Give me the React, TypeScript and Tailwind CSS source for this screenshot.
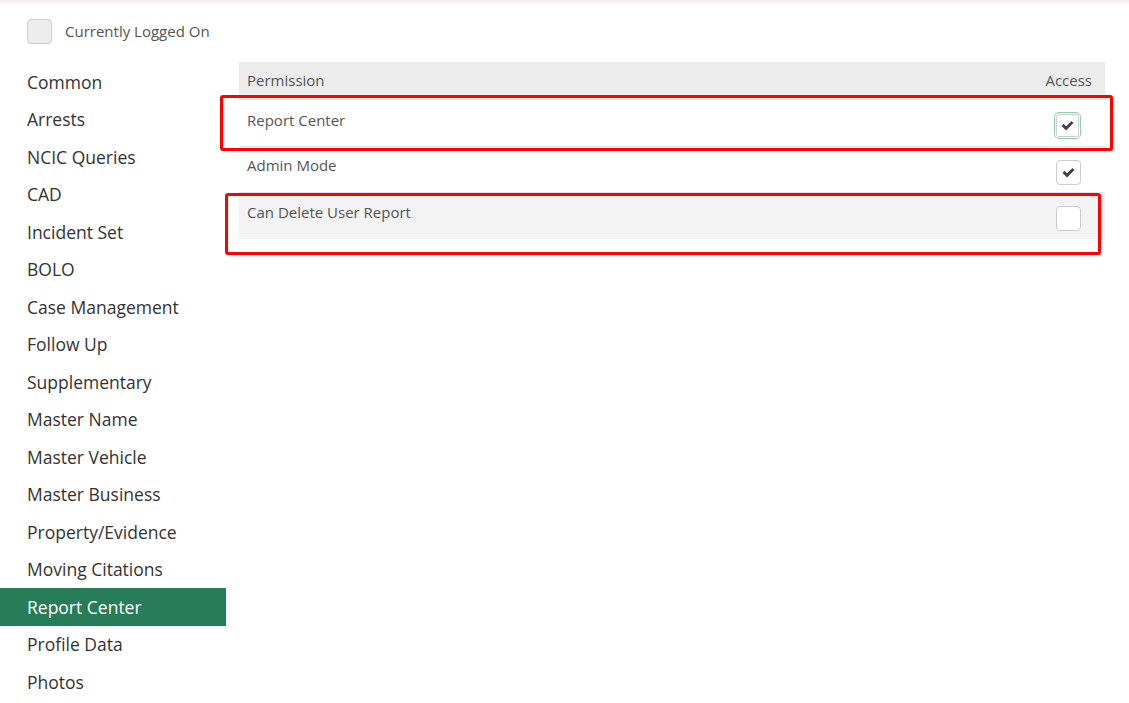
import React from "react";

const menu = [
  "Common",
  "Arrests",
  "NCIC Queries",
  "CAD",
  "Incident Set",
  "BOLO",
  "Case Management",
  "Follow Up",
  "Supplementary",
  "Master Name",
  "Master Vehicle",
  "Master Business",
  "Property/Evidence",
  "Moving Citations",
  "Report Center",
  "Profile Data",
  "Photos",
];

const rows = [
  { label: "Report Center", checked: true, focused: true },
  { label: "Admin Mode", checked: true, focused: false },
  { label: "Can Delete User Report", checked: false, focused: false },
];

function Check() {
  return (
    <svg viewBox="0 0 16 16" className="h-[15px] w-[15px]">
      <path d="M1.6 8.4l2.2-2.2 2.7 2.7L12.2 3.2l2.2 2.2-7.9 7.9z" fill="#444" />
    </svg>
  );
}

function Box({ checked, focused }: { checked: boolean; focused: boolean }) {
  return (
    <div
      className={
        focused
          ? "flex h-[27px] w-[27px] items-center justify-center rounded-[5px] border border-[#8fcfa8] bg-white"
          : "flex h-[25px] w-[25px] items-center justify-center rounded-[4px] border border-[#cccccc] bg-white"
      }
    >
      {focused ? (
        <div className="flex h-[23px] w-[23px] items-center justify-center rounded-[3px] border border-[#cfcfcf]">
          {checked && <Check />}
        </div>
      ) : (
        checked && <Check />
      )}
    </div>
  );
}

export default function App() {
  return (
    <div
      className="min-h-[703px] w-full bg-white text-[#333]"
      style={{ fontFamily: '"Open Sans", "Noto Sans", sans-serif' }}
    >
      <div className="h-[3px] bg-[#f7f1f7]" />
      <div className="flex items-center gap-[13px] pl-[27px] pt-[16px]">
        <div className="h-[25px] w-[25px] rounded-[4px] border border-[#cdcdcd] bg-[#ececec]" />
        <span className="text-[15px] text-[#555]">Currently Logged On</span>
      </div>
      <div className="flex pt-[18px]">
        <ul className="w-[226px] shrink-0 pt-[1px]">
          {menu.map((m) => (
            <li
              key={m}
              className={
                m === "Report Center"
                  ? "flex h-[37.5px] items-center bg-[#267d58] pl-[27px] text-[17.5px] text-white"
                  : "flex h-[37.5px] items-center pl-[27px] text-[17.5px] text-[#333]"
              }
            >
              {m}
            </li>
          ))}
        </ul>
        <div className="relative ml-[13px] w-[866px] text-[15px] text-[#555]">
          <div className="flex h-[37px] items-center justify-between bg-[#ececec] px-[8px] pr-[13px]">
            <span>Permission</span>
            <span>Access</span>
          </div>
          {rows.map((r, i) => (
            <div
              key={r.label}
              className={
                (i === 2 ? "bg-[#f3f3f3] " : "bg-white ") +
                "flex h-[46.5px] justify-between border-t border-[#e3e3e3] pl-[8px] pr-[24px] first:border-t-0"
              }
            >
              <span className={i === 0 ? "pt-[9px]" : "pt-[7.5px]"}>{r.label}</span>
              <div className={r.focused ? "pt-[12px]" : "pt-[13px]"}>
                <Box checked={r.checked} focused={r.focused} />
              </div>
            </div>
          ))}
          <div className="pointer-events-none absolute left-[-19px] top-[33px] h-[56px] w-[893px] rounded-[3px] border-[3.5px] border-[#ff0000]" />
          <div className="pointer-events-none absolute left-[-14px] top-[131px] h-[62px] w-[876px] rounded-[3px] border-[3.5px] border-[#ff0000]" />
        </div>
      </div>
    </div>
  );
}
